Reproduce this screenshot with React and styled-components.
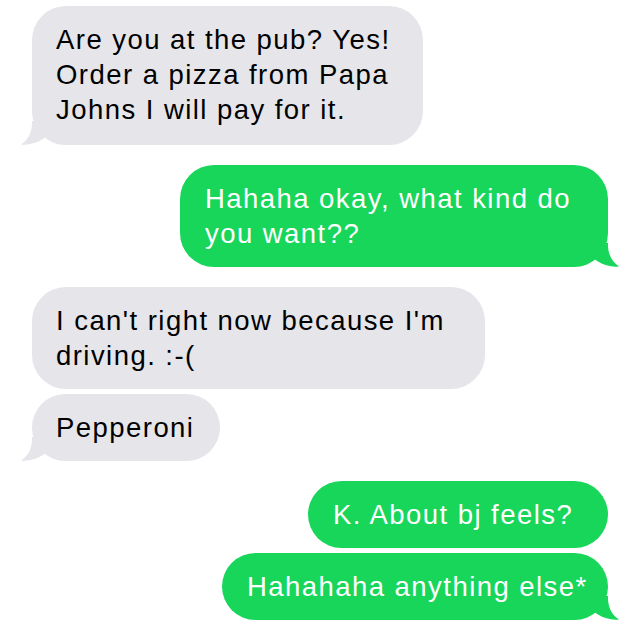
import React from "react";
import styled, { createGlobalStyle } from "styled-components";

const Global = createGlobalStyle`
  html, body { margin: 0; padding: 0; background: #ffffff; }
  body { font-family: "Liberation Sans", Arial, sans-serif; }
`;

const Thread = styled.div`
  width: 640px;
  height: 640px;
  box-sizing: border-box;
  padding: 6px 32px 0;
  display: flex;
  flex-direction: column;
  gap: 20px;
  background: #ffffff;
  overflow: hidden;
`;

const Group = styled.div`
  display: flex;
  flex-direction: column;
  gap: 5px;
  align-items: ${(p) => (p.$mine ? "flex-end" : "flex-start")};
`;

const Bubble = styled.div`
  position: relative;
  box-sizing: border-box;
  width: ${(p) => p.$w}px;
  padding: 16px 0 ${(p) => p.$pb}px ${(p) => (p.$mine ? 25 : 24)}px;
  border-radius: 34px;
  background: ${(p) => (p.$mine ? "#17d65a" : "#e5e5ea")};
  color: ${(p) => (p.$mine ? "#ffffff" : "#000000")};
  font-size: 27.5px;
  line-height: 35px;
  letter-spacing: 1.45px;
  white-space: nowrap;
`;

const Line = styled.span`
  display: block;
`;

const TailSvg = styled.svg`
  position: absolute;
  bottom: 0;
  width: 28px;
  height: 24px;
  ${(p) =>
    p.$mine
      ? "right: -11px; transform: scaleX(-1);"
      : "left: -11px;"}
`;

function Tail({ mine }) {
  return (
    <TailSvg $mine={mine} viewBox="0 0 28 24" aria-hidden="true">
      <path
        d="M11 0 C11.5 11 7 19 0 23.5 C7 24.3 15 22.5 21 18.5 L28 14 L28 0 Z"
        fill={mine ? "#17d65a" : "#e5e5ea"}
      />
    </TailSvg>
  );
}

function Message({ mine, w, tail, lines, pb = 16 }) {
  return (
    <Bubble $mine={mine} $w={w} $pb={pb}>
      {lines.map((l, i) => (
        <Line key={i}>{l}</Line>
      ))}
      {tail && <Tail mine={mine} />}
    </Bubble>
  );
}

export default function App() {
  return (
    <>
      <Global />
      <Thread>
        <Group>
          <Message
            w={391}
            tail
            pb={18}
            lines={[
              "Are you at the pub? Yes!",
              "Order a pizza from Papa",
              "Johns I will pay for it.",
            ]}
          />
        </Group>
        <Group $mine>
          <Message
            mine
            w={428}
            tail
            lines={["Hahaha okay, what kind do", "you want??"]}
          />
        </Group>
        <Group>
          <Message
            w={453}
            lines={["I can't right now because I'm", "driving. :-("]}
          />
          <Message w={188} tail lines={["Pepperoni"]} />
        </Group>
        <Group $mine>
          <Message mine w={300} lines={["K. About bj feels?"]} />
          <Message mine w={386} tail lines={["Hahahaha anything else*"]} />
        </Group>
      </Thread>
    </>
  );
}
